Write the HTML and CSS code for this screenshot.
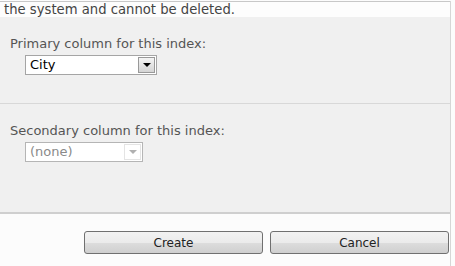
FILE: index.html
```html
<!DOCTYPE html>
<html lang="en">
<head>
  <meta charset="UTF-8" />
  <title>New Index</title>
  <link rel="stylesheet" href="styles.css">
</head>
<body>

  <div class="frame">
    <div class="note">the system and cannot be deleted.</div>

    <div class="section primary">
      <label for="primaryCol">Primary column for this index:</label>
      <div class="combo combo-wide">
        <span class="combo-value">City</span>
        <span class="combo-btn"><span class="arrow"></span></span>
      </div>
    </div>

    <div class="section secondary">
      <label for="secondaryCol">Secondary column for this index:</label>
      <div class="combo combo-narrow disabled">
        <span class="combo-value">(none)</span>
        <span class="combo-btn"><span class="arrow"></span></span>
      </div>
    </div>

    <div class="footer">
      <button class="btn">Create</button>
      <button class="btn">Cancel</button>
    </div>
  </div>

</body>
</html>
```

FILE: styles.css
```css
body {
  margin: 0;
  font-family: "DejaVu Sans", Verdana, sans-serif;
  font-size: 13px;
  color: #4c4c4c;
  background: #fcfcfc;
  overflow: hidden;
}
.frame {
  width: 450px;
  border-right: 1px solid #d6d6d6;
}
.note {
  margin-top: 1px;
  border-top: 1px solid #c8c8c8;
  background: #fdfdfd;
  height: 15px;
  padding: 0 4px;
  line-height: 15px;
  font-size: 13.2px;
  color: #444;
}
.section {
  background: #f0f0f0;
  padding: 19px 10px 0;
}
.primary {
  height: 67px;
  border-bottom: 1px solid #d8d8d8;
}
.secondary {
  height: 89px;
  border-bottom: 2px solid #cfcfcf;
}
label {
  display: block;
  font-size: 13px;
  line-height: 16px;
  color: #555;
  margin-bottom: 3px;
}
.combo {
  display: flex;
  margin-left: 15px;
  height: 18px;
  border: 1px solid #a5a5a5;
  background: #fff;
  box-sizing: content-box;
}
.combo-wide {
  width: 130px;
}
.combo-narrow {
  width: 116px;
}
.combo-value {
  flex: 1;
  padding-left: 4px;
  line-height: 18px;
  font-size: 13px;
  color: #000;
}
.combo-btn {
  width: 15px;
  margin: 1px;
  border: 1px solid #999;
  background: linear-gradient(#f4f4f4, #d4d4d4);
  display: flex;
  align-items: center;
  justify-content: center;
}
.arrow {
  width: 0;
  height: 0;
  border-left: 4px solid transparent;
  border-right: 4px solid transparent;
  border-top: 4px solid #000;
}
.disabled {
  border-color: #b5b5b5;
}
.disabled .combo-value {
  color: #8a8a8a;
}
.disabled .combo-btn {
  border-color: #e4e4e4;
  background: #fff;
}
.disabled .arrow {
  border-top-color: #b0b0b0;
}
.footer {
  display: flex;
  justify-content: flex-end;
  gap: 7px;
  padding: 17px 1px 0 0;
  height: 35px;
  background: #fcfcfc;
}
.btn {
  width: 179px;
  height: 23px;
  border: 1px solid #707070;
  border-radius: 3px;
  background: linear-gradient(#f2f2f2 0%, #ebebeb 50%, #dddddd 51%, #cfcfcf 100%);
  font-family: "DejaVu Sans", Verdana, sans-serif;
  font-size: 12px;
  color: #222;
  padding: 0;
}
```
